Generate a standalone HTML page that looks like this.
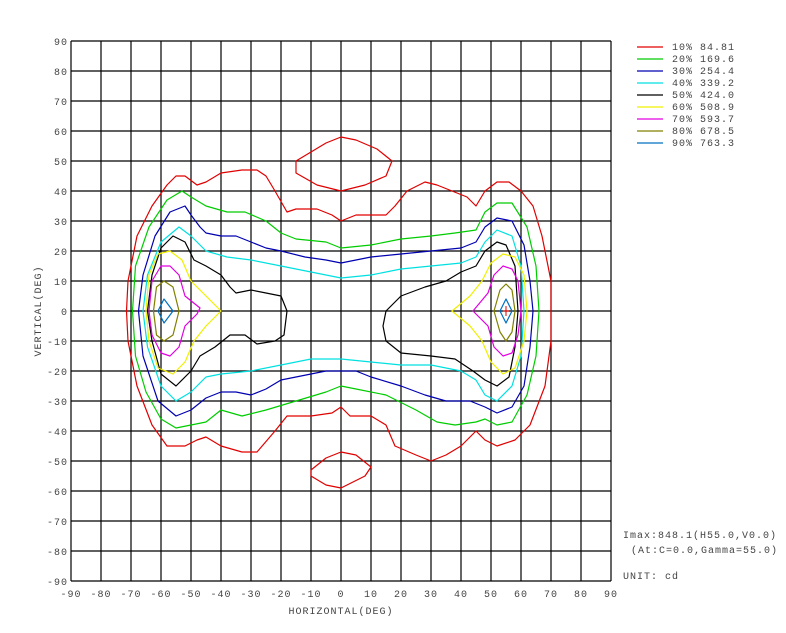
<!DOCTYPE html>
<html><head><meta charset="utf-8"><style>
body{margin:0;background:#fff;width:786px;height:633px;overflow:hidden}
svg{display:block}
text{font-family:"Liberation Mono",monospace;font-size:10px;fill:#444;letter-spacing:1px}
.c polygon{fill:none;stroke-width:1.2;vector-effect:non-scaling-stroke;stroke-linejoin:round}
</style></head><body>
<svg width="786" height="633" xmlns="http://www.w3.org/2000/svg">
<g stroke="#000" stroke-width="1.2">
<path d="M71 41V581M101 41V581M131 41V581M161 41V581M191 41V581M221 41V581M251 41V581M281 41V581M311 41V581M341 41V581M371 41V581M401 41V581M431 41V581M461 41V581M491 41V581M521 41V581M551 41V581M581 41V581M611 41V581"/>
<path d="M71 41H611M71 71H611M71 101H611M71 131H611M71 161H611M71 191H611M71 221H611M71 251H611M71 281H611M71 311H611M71 341H611M71 371H611M71 401H611M71 431H611M71 461H611M71 491H611M71 521H611M71 551H611M71 581H611"/>
</g>
<g text-anchor="end">
<text x="68" y="45">90</text><text x="68" y="75">80</text><text x="68" y="105">70</text><text x="68" y="135">60</text><text x="68" y="165">50</text><text x="68" y="195">40</text><text x="68" y="225">30</text><text x="68" y="255">20</text><text x="68" y="285">10</text><text x="68" y="315">0</text><text x="68" y="345">-10</text><text x="68" y="375">-20</text><text x="68" y="405">-30</text><text x="68" y="435">-40</text><text x="68" y="465">-50</text><text x="68" y="495">-60</text><text x="68" y="525">-70</text><text x="68" y="555">-80</text><text x="68" y="585">-90</text>
</g>
<g text-anchor="middle">
<text x="71" y="597">-90</text><text x="101" y="597">-80</text><text x="131" y="597">-70</text><text x="161" y="597">-60</text><text x="191" y="597">-50</text><text x="221" y="597">-40</text><text x="251" y="597">-30</text><text x="281" y="597">-20</text><text x="311" y="597">-10</text><text x="341" y="597">0</text><text x="371" y="597">10</text><text x="401" y="597">20</text><text x="431" y="597">30</text><text x="461" y="597">40</text><text x="491" y="597">50</text><text x="521" y="597">60</text><text x="551" y="597">70</text><text x="581" y="597">80</text><text x="611" y="597">90</text>
<text x="341" y="614">HORIZONTAL(DEG)</text>
<text x="0" y="0" transform="translate(41,311) rotate(-90)">VERTICAL(DEG)</text>
</g>
<g class="c" transform="matrix(3,0,0,-3,341,311)">
<polygon stroke="#e00000" points="-71.5,0 -71,10 -68,25 -63,35 -58,42 -55,45 -52,45 -48,42 -45,43 -40,46 -33,47 -28,47 -25,45 -22,40 -18,33 -15,34 -8,34 -3,32 0,30 5,32 10,32 15,32 18,35 22,40 28,43 32,42 37,40 42,38 45,35 48,40 52,43 56,43 60,40 64,35 67,25 70,10 70,0 70,-10 68,-25 63,-38 58,-43 52,-45 48,-43 45,-40 40,-45 35,-48 30,-50 25,-48 18,-45 15,-38 10,-35 3,-35 0,-32 -3,-34 -10,-35 -18,-35 -22,-40 -28,-47 -33,-47 -40,-45 -45,-42 -48,-43 -52,-45 -58,-45 -63,-38 -68,-25 -71,-10"/>
<polygon stroke="#e00000" points="-15,50 -10,53 -5,56 0,58 5,57 12,54 17,50 15,45 8,42 0,40 -8,42 -15,46"/>
<polygon stroke="#e00000" points="-10,-53 -5,-49 0,-47 5,-48 10,-52 8,-55 0,-59 -5,-58 -10,-55"/>
<polygon stroke="#00cc00" points="-69.5,0 -68.5,15 -64,28 -58,37 -53,40 -50,38 -45,35 -38,33 -32,33 -25,30 -20,26 -15,24 -5,23 0,21 10,22 20,24 30,25 38,26 45,27 48,33 52,36 57,36 62,28 65,15 66,0 65,-15 62,-28 57,-37 52,-38 48,-36 45,-37 38,-38 32,-37 25,-33 15,-28 5,-26 0,-25 -5,-27 -15,-30 -25,-33 -33,-35 -40,-33 -45,-37 -50,-38 -55,-39 -60,-36 -65,-27 -68.5,-15"/>
<polygon stroke="#0000b0" points="-67.5,0 -66,12 -62,25 -57,33 -52,35 -50,32 -47,28 -45,26 -40,25 -35,25 -30,23 -25,21 -20,20 -12,18 -5,17 0,16 5,17 10,18 20,19 30,20 40,21 45,23 48,28 52,31 57,30 61,22 63,10 64,0 63,-12 61,-25 57,-32 52,-34 48,-32 43,-30 35,-30 28,-28 20,-25 10,-22 5,-20 0,-20 -5,-20 -10,-21 -20,-23 -25,-26 -30,-28 -35,-27 -40,-27 -45,-29 -50,-33 -55,-35 -61,-30 -66,-15"/>
<polygon stroke="#00e0e0" points="-66,0 -64.5,12 -60,23 -54,28 -50,25 -45,20 -38,18 -30,17 -20,15 -10,13 0,11 10,12 20,14 30,15 40,16 45,18 48,23 52,27 57,25 60,15 61,0 60,-15 57,-25 52,-30 48,-28 45,-23 40,-20 30,-18 20,-18 10,-17 0,-16 -10,-16 -20,-18 -30,-20 -40,-21 -45,-22 -50,-27 -55,-30 -60,-25 -64.5,-12"/>
<polygon stroke="#000" points="-64.5,0 -63,12 -60,21 -56,25 -52,23 -49,17 -45,15 -40,12 -37,8 -35,6 -30,7 -25,6 -20,5 -18,0 -19,-8 -22,-10 -28,-11 -32,-8 -37,-8 -42,-12 -47,-15 -50,-20 -55,-25 -60,-21 -63,-10"/>
<polygon stroke="#000" points="59,0 58,15 55,22 52,23 48,20 45,15 40,13 35,10 28,8 20,5 15,0 14,-5 15,-10 20,-14 30,-15 38,-16 44,-20 48,-23 52,-25 56,-22 58,-12"/>
<polygon stroke="#f0f000" points="-65,0 -64,12 -61,19 -57,20 -53,17 -50,10 -45,5 -40,0 -45,-5 -49,-10 -52,-17 -56,-21 -61,-19 -64,-10"/>
<polygon stroke="#f0f000" points="62,0 61,12 58,18 54,19 50,16 47,10 43,5 37,0 43,-5 47,-10 50,-17 54,-21 58,-19 61,-10"/>
<polygon stroke="#e000e0" points="-64,0 -63,10 -60,15 -57,15 -54,12 -52,5 -47,1 -48,-1 -52,-5 -54,-12 -57,-15 -60,-14 -63,-8"/>
<polygon stroke="#e000e0" points="60,0 59,10 57,14 54,15 51,12 49,6 44,0 49,-5 51,-12 54,-15 57,-14 59,-8"/>
<polygon stroke="#808000" points="-62.5,0 -61.5,8 -59,10 -56,8 -54,0 -56,-8 -59,-10 -61.5,-8"/>
<polygon stroke="#808000" points="58,0 57,7 55,9 53,7 51,0 53,-7 55,-10 57,-7"/>
<polygon stroke="#0070c0" points="-61,0 -59,4 -56,0 -59,-4"/>
<polygon stroke="#0070c0" points="57,0 55,4 53,0 55,-4"/>
</g>
<path d="M506 306V316M503 311H509" stroke="#e00000" stroke-width="1"/>
<g stroke-width="1.2">
<path d="M637 47H663" stroke="#e00000"/><path d="M637 59H663" stroke="#00cc00"/><path d="M637 71H663" stroke="#0000b0"/><path d="M637 83H663" stroke="#00e0e0"/><path d="M637 95H663" stroke="#000"/><path d="M637 107H663" stroke="#f0f000"/><path d="M637 119H663" stroke="#e000e0"/><path d="M637 131H663" stroke="#808000"/><path d="M637 143H663" stroke="#0070c0"/>
</g>
<text x="672" y="50">10% 84.81</text><text x="672" y="62">20% 169.6</text><text x="672" y="74">30% 254.4</text><text x="672" y="86">40% 339.2</text><text x="672" y="98">50% 424.0</text><text x="672" y="110">60% 508.9</text><text x="672" y="122">70% 593.7</text><text x="672" y="134">80% 678.5</text><text x="672" y="146">90% 763.3</text>
<text x="623" y="538">Imax:848.1(H55.0,V0.0)</text>
<text x="631" y="553">(At:C=0.0,Gamma=55.0)</text>
<text x="623" y="579">UNIT: cd</text>
</svg>
</body></html>
